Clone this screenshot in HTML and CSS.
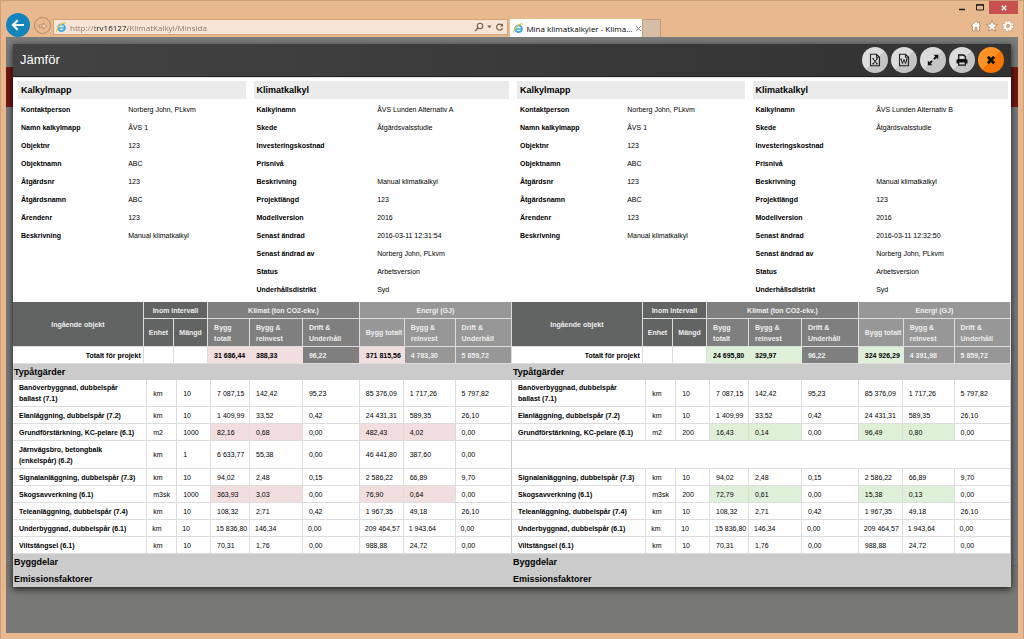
FILE: index.html
```html
<!DOCTYPE html>
<html lang="sv">
<head>
<meta charset="utf-8">
<title>Mina klimatkalkyler - Klimatkalkyl</title>
<link rel="stylesheet" href="styles.css">
</head>
<body>
<div class="browser">
  <header class="chrome">
    <div class="titlebar">
      <button class="win-btn" aria-label="Minimera"><svg width="10" height="10" viewBox="0 0 10 10"><path d="M2 6.500h6" stroke="#222" stroke-width="1.6"/></svg></button>
      <button class="win-btn" aria-label="Maximera"><svg width="10" height="10" viewBox="0 0 10 10"><path d="M1.500 2h7v5h-7z" fill="none" stroke="#222"/><path d="M1 1.800h8" stroke="#222" stroke-width="1.400"/></svg></button>
      <button class="win-btn win-close" aria-label="Stäng fönster"><svg width="8" height="8" viewBox="0 0 8 8"><path d="M1.800 1.800l4.400 4.400M6.200 1.800L1.800 6.200" stroke="#fff" stroke-width="1.300"/></svg></button>
    </div>
    <div class="toolbar">
      <button class="back" aria-label="Bakåt"><svg width="14" height="14" viewBox="0 0 14 14"><path d="M13 7H2M6.700 2.200L1.900 7l4.800 4.800" fill="none" stroke="#fff" stroke-width="2.200"/></svg></button>
      <button class="forward" aria-label="Framåt"><svg width="10" height="10" viewBox="0 0 10 10"><path d="M1 4h4V1.800L8.800 5 5 8.200V6H1z" fill="#efcfb0" stroke="#b0805a" stroke-width=".8"/></svg></button>
      <div class="address">
        <svg class="ie" width="11" height="11" viewBox="0 0 12 12"><circle cx="6" cy="6.300" r="3.700" fill="#d9f1fb" stroke="#42a9dc" stroke-width="2"/><path d="M3 6.500h6.500" stroke="#42a9dc" stroke-width="1.500"/><path d="M1 10.800C-.5 8 6-.5 10.800 1.200" fill="none" stroke="#e3c83f" stroke-width="1.300"/></svg>
        <input class="url" type="text" aria-label="Adress" value="http://trv16127/KlimatKalkyl/Minsida">
        <button class="mini" aria-label="Sök"><svg width="10" height="10" viewBox="0 0 10 10"><circle cx="6" cy="4" r="2.700" fill="none" stroke="#7b5d48" stroke-width="1.100"/><path d="M4 6L1 9" stroke="#7b5d48" stroke-width="1.300"/></svg></button>
        <button class="mini mini-narrow" aria-label="Visa adresser"><svg width="5" height="4" viewBox="0 0 5 4"><path d="M.3.500h4.400L2.500 3.200z" fill="#7b5d48"/></svg></button>
        <button class="mini" aria-label="Uppdatera"><svg width="9" height="9" viewBox="0 0 9 9"><path d="M7 2.300A3 3 0 1 0 7.500 5" fill="none" stroke="#7b5d48" stroke-width="1.200"/><path d="M8 .4v3.100H4.900z" fill="#7b5d48"/></svg></button>
      </div>
      <div class="tab">
        <svg class="ie" width="11" height="11" viewBox="0 0 12 12"><circle cx="6" cy="6.300" r="3.700" fill="#d9f1fb" stroke="#42a9dc" stroke-width="2"/><path d="M3 6.500h6.500" stroke="#42a9dc" stroke-width="1.500"/><path d="M1 10.800C-.5 8 6-.5 10.800 1.200" fill="none" stroke="#e3c83f" stroke-width="1.300"/></svg>
        <span class="tab-title">Mina klimatkalkyler - Klima...</span>
        <button class="mini mini-narrow" aria-label="Stäng flik"><svg width="7" height="7" viewBox="0 0 7 7"><path d="M1 1l5 5M6 1L1 6" stroke="#888" stroke-width="1"/></svg></button>
      </div>
      <button class="new-tab" aria-label="Ny flik"></button>
      <nav class="tools">
        <button class="mini" aria-label="Startsida"><svg width="12" height="12" viewBox="0 0 12 12"><path d="M6 1L1 6h1.500v5h2.600V7.500h1.800V11h2.600V6H11L9.500 4.400V2H8v1z" fill="#fff" stroke="#a87b58" stroke-width=".7"/></svg></button>
        <button class="mini" aria-label="Favoriter"><svg width="12" height="12" viewBox="0 0 12 12"><path d="M6 .4l1.600 3.700 4 .3-3.100 2.700 1 4L6 9l-3.500 2.100 1-4L.4 4.400l4-.3z" fill="#fff" stroke="#a87b58" stroke-width=".7"/></svg></button>
        <button class="mini" aria-label="Verktyg"><svg width="12" height="12" viewBox="0 0 12 12"><circle cx="6" cy="6" r="4.500" fill="none" stroke="#b98e6b" stroke-width="2.600" stroke-dasharray="2.200 1.330"/><circle cx="6" cy="6" r="4.400" fill="none" stroke="#fff" stroke-width="1.800" stroke-dasharray="1.900 1.556"/><circle cx="6" cy="6" r="2.900" fill="none" stroke="#fff" stroke-width="1.900"/><circle cx="6" cy="6" r="1.500" fill="#e7b98f" stroke="#b98e6b" stroke-width=".6"/></svg></button>
      </nav>
    </div>
  </header>

  <main class="viewport">
    <section class="modal" role="dialog" aria-labelledby="dialog-title">
      <header class="modal-head">
        <h1 class="modal-title" id="dialog-title">Jämför</h1>
        <div class="actions">
          <button class="round" aria-label="Exportera till Excel"><svg width="14" height="14" viewBox="0 0 14 14"><path d="M2.500 1.200h6l3 3v8.600h-9zM8.500 1.200v3h3" fill="none" stroke="#222" stroke-width="1.100"/><path d="M5 5.800l4 5M9 5.800l-4 5M4.200 5.800h2M8 5.800h1.800M4.200 10.800h2M8 10.800h1.800" stroke="#222"/></svg></button>
          <button class="round" aria-label="Exportera till Word"><svg width="14" height="14" viewBox="0 0 14 14"><path d="M2.500 1.200h6l3 3v8.600h-9zM8.500 1.200v3h3" fill="none" stroke="#222" stroke-width="1.100"/><path d="M4 6l1.400 4.500L7 6.500l1.600 4L10 6M3.500 6h1.600M8.900 6h1.600" fill="none" stroke="#222"/></svg></button>
          <button class="round" aria-label="Maximera dialog"><svg width="14" height="14" viewBox="0 0 14 14"><path d="M7.600 1.800h4.600v4.600zM1.800 7.600v4.600h4.600z" fill="#111"/><path d="M10.500 3.500L7.900 6.100M3.500 10.500l2.600-2.600" stroke="#111" stroke-width="1.900"/></svg></button>
          <button class="round" aria-label="Skriv ut"><svg width="14" height="14" viewBox="0 0 14 14"><path d="M3.700 6.500V2h5l1.600 1.600v2.900" fill="none" stroke="#111" stroke-width="1.300"/><path d="M1.500 7.500q0-1.500 1.500-1.500h8q1.500 0 1.500 1.500V10.500h-11z" fill="#111"/><path d="M3.700 8.900h6.600v3.300H3.700z" fill="#d5d5d5" stroke="#111" stroke-width="1.200"/></svg></button>
          <button class="round round-close" aria-label="Stäng"><svg width="12" height="12" viewBox="0 0 12 12"><path d="M2.800 2.800l6.400 6.400M9.200 2.800L2.800 9.200" stroke="#111" stroke-width="2.800"/></svg></button>
        </div>
      </header>

      <div class="info">
        <section class="panel">
          <h2 class="panel-title">Kalkylmapp</h2>
          <dl class="facts">
            <dt>Kontaktperson</dt><dd>Norberg John, PLkvm</dd>
            <dt>Namn kalkylmapp</dt><dd>ÅVS 1</dd>
            <dt>Objektnr</dt><dd>123</dd>
            <dt>Objektnamn</dt><dd>ABC</dd>
            <dt>Åtgärdsnr</dt><dd>123</dd>
            <dt>Åtgärdsnamn</dt><dd>ABC</dd>
            <dt>Ärendenr</dt><dd>123</dd>
            <dt>Beskrivning</dt><dd>Manual klimatkalkyl</dd>
          </dl>
        </section>
        <section class="panel">
          <h2 class="panel-title">Klimatkalkyl</h2>
          <dl class="facts">
            <dt>Kalkylnamn</dt><dd>ÅVS Lunden Alternativ A</dd>
            <dt>Skede</dt><dd>Åtgärdsvalsstudie</dd>
            <dt>Investeringskostnad</dt><dd></dd>
            <dt>Prisnivå</dt><dd></dd>
            <dt>Beskrivning</dt><dd>Manual klimatkalkyl</dd>
            <dt>Projektlängd</dt><dd>123</dd>
            <dt>Modellversion</dt><dd>2016</dd>
            <dt>Senast ändrad</dt><dd>2016-03-11 12:31:54</dd>
            <dt>Senast ändrad av</dt><dd>Norberg John, PLkvm</dd>
            <dt>Status</dt><dd>Arbetsversion</dd>
            <dt>Underhållsdistrikt</dt><dd>Syd</dd>
          </dl>
        </section>
        <section class="panel">
          <h2 class="panel-title">Kalkylmapp</h2>
          <dl class="facts">
            <dt>Kontaktperson</dt><dd>Norberg John, PLkvm</dd>
            <dt>Namn kalkylmapp</dt><dd>ÅVS 1</dd>
            <dt>Objektnr</dt><dd>123</dd>
            <dt>Objektnamn</dt><dd>ABC</dd>
            <dt>Åtgärdsnr</dt><dd>123</dd>
            <dt>Åtgärdsnamn</dt><dd>ABC</dd>
            <dt>Ärendenr</dt><dd>123</dd>
            <dt>Beskrivning</dt><dd>Manual klimatkalkyl</dd>
          </dl>
        </section>
        <section class="panel">
          <h2 class="panel-title">Klimatkalkyl</h2>
          <dl class="facts">
            <dt>Kalkylnamn</dt><dd>ÅVS Lunden Alternativ B</dd>
            <dt>Skede</dt><dd>Åtgärdsvalsstudie</dd>
            <dt>Investeringskostnad</dt><dd></dd>
            <dt>Prisnivå</dt><dd></dd>
            <dt>Beskrivning</dt><dd>Manual klimatkalkyl</dd>
            <dt>Projektlängd</dt><dd>123</dd>
            <dt>Modellversion</dt><dd>2016</dd>
            <dt>Senast ändrad</dt><dd>2016-03-11 12:32:50</dd>
            <dt>Senast ändrad av</dt><dd>Norberg John, PLkvm</dd>
            <dt>Status</dt><dd>Arbetsversion</dd>
            <dt>Underhållsdistrikt</dt><dd>Syd</dd>
          </dl>
        </section>
      </div>

      <div class="compare">
        <section class="side side-a">
          <table class="grid grid-head">
            <colgroup><col class="h-name"><col class="h-unit"><col class="h-qty"><col class="h-build"><col class="h-reinv"><col class="h-oper"><col class="h-ebuild"><col class="h-ereinv"><col></colgroup>
            <thead>
              <tr class="groups"><th rowspan="2" class="dark">Ingående objekt</th><th colspan="2" class="dark">Inom intervall</th><th colspan="3" class="mid">Klimat (ton CO2-ekv.)</th><th colspan="3" class="light">Energi (GJ)</th></tr>
              <tr class="names"><th class="dark">Enhet</th><th class="dark">Mängd</th><th class="mid start">Bygg<br>totalt</th><th class="mid start">Bygg &amp;<br>reinvest</th><th class="mid start">Drift &amp;<br>Underhåll</th><th class="light start">Bygg totalt</th><th class="light start">Bygg &amp;<br>reinvest</th><th class="light start">Drift &amp;<br>Underhåll</th></tr>
            </thead>
            <tbody>
              <tr class="total"><th class="end">Totalt för projekt</th><td></td><td></td><td class="diff">31 686,44</td><td class="diff">388,33</td><td class="mid">96,22</td><td class="diff">371 815,56</td><td class="light">4 783,30</td><td class="light">5 859,72</td></tr>
            </tbody>
          </table>
          <h2 class="group-title group-open">Typåtgärder</h2>
          <table class="grid grid-body">
            <colgroup><col class="b-name"><col class="b-unit"><col class="b-qty"><col class="b-build"><col class="b-reinv"><col class="b-oper"><col class="b-ebuild"><col class="b-ereinv"><col></colgroup>
            <tbody>
              <tr><th>Banöverbyggnad, dubbelspår<br>ballast (7.1)</th><td>km</td><td>10</td><td>7 087,15</td><td>142,42</td><td>95,23</td><td>85 376,09</td><td>1 717,26</td><td>5 797,82</td></tr>
              <tr><th>Elanläggning, dubbelspår (7.2)</th><td>km</td><td>10</td><td>1 409,99</td><td>33,52</td><td>0,42</td><td>24 431,31</td><td>589,35</td><td>26,10</td></tr>
              <tr><th>Grundförstärkning, KC-pelare (6.1)</th><td>m2</td><td>1000</td><td class="diff">82,16</td><td class="diff">0,68</td><td>0,00</td><td class="diff">482,43</td><td class="diff">4,02</td><td>0,00</td></tr>
              <tr class="tall"><th>Järnvägsbro, betongbalk<br>(enkelspår) (6.2)</th><td>km</td><td>1</td><td>6 633,77</td><td>55,38</td><td>0,00</td><td>46 441,80</td><td>387,60</td><td>0,00</td></tr>
              <tr><th>Signalanläggning, dubbelspår (7.3)</th><td>km</td><td>10</td><td>94,02</td><td>2,48</td><td>0,15</td><td>2 586,22</td><td>66,89</td><td>9,70</td></tr>
              <tr><th>Skogsavverkning (6.1)</th><td>m3sk</td><td>1000</td><td class="diff">363,93</td><td class="diff">3,03</td><td>0,00</td><td class="diff">76,90</td><td class="diff">0,64</td><td>0,00</td></tr>
              <tr><th>Teleanläggning, dubbelspår (7.4)</th><td>km</td><td>10</td><td>108,32</td><td>2,71</td><td>0,42</td><td>1 967,35</td><td>49,18</td><td>26,10</td></tr>
              <tr class="wide"><th>Underbyggnad, dubbelspår (6.1)</th><td>km</td><td>10</td><td>15 836,80</td><td>146,34</td><td>0,00</td><td>209 464,57</td><td>1 943,64</td><td>0,00</td></tr>
              <tr><th>Viltstängsel (6.1)</th><td>km</td><td>10</td><td>70,31</td><td>1,76</td><td>0,00</td><td>988,88</td><td>24,72</td><td>0,00</td></tr>
            </tbody>
          </table>
          <h2 class="group-title">Byggdelar</h2>
          <h2 class="group-title group-last">Emissionsfaktorer</h2>
        </section>

        <section class="side side-b">
          <table class="grid grid-head">
            <colgroup><col class="h-name"><col class="h-unit"><col class="h-qty"><col class="h-build"><col class="h-reinv"><col class="h-oper"><col class="h-ebuild"><col class="h-ereinv"><col></colgroup>
            <thead>
              <tr class="groups"><th rowspan="2" class="dark">Ingående objekt</th><th colspan="2" class="dark">Inom intervall</th><th colspan="3" class="mid">Klimat (ton CO2-ekv.)</th><th colspan="3" class="light">Energi (GJ)</th></tr>
              <tr class="names"><th class="dark">Enhet</th><th class="dark">Mängd</th><th class="mid start">Bygg<br>totalt</th><th class="mid start">Bygg &amp;<br>reinvest</th><th class="mid start">Drift &amp;<br>Underhåll</th><th class="light start">Bygg totalt</th><th class="light start">Bygg &amp;<br>reinvest</th><th class="light start">Drift &amp;<br>Underhåll</th></tr>
            </thead>
            <tbody>
              <tr class="total"><th class="end">Totalt för projekt</th><td></td><td></td><td class="diff">24 695,80</td><td class="diff">329,97</td><td class="mid">96,22</td><td class="diff">324 926,29</td><td class="light">4 391,98</td><td class="light">5 859,72</td></tr>
            </tbody>
          </table>
          <h2 class="group-title group-open">Typåtgärder</h2>
          <table class="grid grid-body">
            <colgroup><col class="b-name"><col class="b-unit"><col class="b-qty"><col class="b-build"><col class="b-reinv"><col class="b-oper"><col class="b-ebuild"><col class="b-ereinv"><col></colgroup>
            <tbody>
              <tr><th>Banöverbyggnad, dubbelspår<br>ballast (7.1)</th><td>km</td><td>10</td><td>7 087,15</td><td>142,42</td><td>95,23</td><td>85 376,09</td><td>1 717,26</td><td>5 797,82</td></tr>
              <tr><th>Elanläggning, dubbelspår (7.2)</th><td>km</td><td>10</td><td>1 409,99</td><td>33,52</td><td>0,42</td><td>24 431,31</td><td>589,35</td><td>26,10</td></tr>
              <tr><th>Grundförstärkning, KC-pelare (6.1)</th><td>m2</td><td>200</td><td class="diff">16,43</td><td class="diff">0,14</td><td>0,00</td><td class="diff">96,49</td><td class="diff">0,80</td><td>0,00</td></tr>
              <tr class="tall"><td colspan="9"></td></tr>
              <tr><th>Signalanläggning, dubbelspår (7.3)</th><td>km</td><td>10</td><td>94,02</td><td>2,48</td><td>0,15</td><td>2 586,22</td><td>66,89</td><td>9,70</td></tr>
              <tr><th>Skogsavverkning (6.1)</th><td>m3sk</td><td>200</td><td class="diff">72,79</td><td class="diff">0,61</td><td>0,00</td><td class="diff">15,38</td><td class="diff">0,13</td><td>0,00</td></tr>
              <tr><th>Teleanläggning, dubbelspår (7.4)</th><td>km</td><td>10</td><td>108,32</td><td>2,71</td><td>0,42</td><td>1 967,35</td><td>49,18</td><td>26,10</td></tr>
              <tr class="wide"><th>Underbyggnad, dubbelspår (6.1)</th><td>km</td><td>10</td><td>15 836,80</td><td>146,34</td><td>0,00</td><td>209 464,57</td><td>1 943,64</td><td>0,00</td></tr>
              <tr><th>Viltstängsel (6.1)</th><td>km</td><td>10</td><td>70,31</td><td>1,76</td><td>0,00</td><td>988,88</td><td>24,72</td><td>0,00</td></tr>
            </tbody>
          </table>
          <h2 class="group-title">Byggdelar</h2>
          <h2 class="group-title group-last">Emissionsfaktorer</h2>
        </section>
      </div>
    </section>
  </main>
</div>
</body>
</html>
```
FILE: styles.css
```css
* { box-sizing: border-box; }

body {
  margin: 0;
  font-family: "Liberation Sans", Arial, sans-serif;
  font-size: 7px;
  line-height: 11px;
  color: #000;
}

button {
  display: flex;
  align-items: center;
  justify-content: center;
  padding: 0;
  border: 0;
  background: none;
  font: inherit;
}

h1, h2, dl, dd { margin: 0; }

/* Browser window */
.browser {
  display: flex;
  flex-direction: column;
  min-height: 100vh;
  padding: 0 5px 6px 5px;
  background: #e8b98e;
  border: solid #c99e79;
  border-width: 1px 1px 0 1px;
}

.titlebar {
  display: flex;
  justify-content: flex-end;
  height: 13px;
}

.win-btn { width: 18px; height: 13px; }
.win-close { width: 29px; background: #c75050; }

.toolbar {
  display: flex;
  align-items: flex-end;
  height: 23px;
}

.back {
  flex: none;
  width: 24px;
  height: 24px;
  border-radius: 50%;
  background: #1484bd;
}

.forward {
  flex: none;
  width: 17px;
  height: 17px;
  margin: 0 2px 3px 4px;
  border: 1px solid #b98a63;
  border-radius: 50%;
}

.address {
  display: flex;
  align-items: center;
  width: 45%;
  height: 16px;
  margin: 0 2px 2px 0;
  padding: 0 2px;
  background: #f7e6d7;
  border: 1px solid #d5a379;
}

.ie { flex: none; }

.url {
  flex: 1;
  min-width: 0;
  height: 14px;
  margin-left: 3px;
  padding: 0;
  border: 0;
  outline: 0;
  font-family: "Open Sans", "Noto Sans", sans-serif;
  font-size: 8px;
  background: linear-gradient(90deg, #857363 0 25px, #111 25px 58px, #857363 58px);
  background-clip: text;
  -webkit-text-fill-color: transparent;
}

.mini { flex: none; min-width: 12px; height: 12px; }
.mini-narrow { min-width: 8px; }

.tab {
  display: flex;
  align-items: center;
  gap: 2px;
  width: 132px;
  height: 18px;
  padding: 0 2px 0 3px;
  background: #fff;
}

.tab-title {
  flex: 1;
  white-space: nowrap;
  font-family: "Open Sans", "Noto Sans", sans-serif;
  font-size: 8px;
}

.new-tab {
  width: 19px;
  height: 18px;
  background: #d5bda6;
  border: solid #c29c7b;
  border-width: 1px 1px 0 1px;
}

.tools {
  display: flex;
  gap: 4px;
  margin: 0 4px 5px auto;
}

/* Dimmed page behind the dialog */
.viewport {
  flex: 1;
  padding: 7px 7px 40px 7px;
  background: linear-gradient(#7b7c7c 0 30px, #701813 30px 70px, #787a7b 70px 528px, #6d6d6d 528px 529px, #787876 529px);
}

.modal {
  background: #fff;
  box-shadow: 0 2px 7px rgba(0, 0, 0, .8);
}

.modal-head {
  display: flex;
  align-items: center;
  justify-content: space-between;
  height: 33px;
  padding: 0 7px;
  background: linear-gradient(90deg, #434343, #323232);
  border-bottom: 1px solid #222;
}

.modal-title {
  font-size: 13px;
  line-height: 16px;
  font-weight: 400;
  color: #fff;
}

.actions { display: flex; gap: 3px; }

.round {
  width: 26px;
  height: 26px;
  border-radius: 50%;
  background: linear-gradient(135deg, #dcdcdc 50%, #c4c4c4 50%);
}

.round-close { background: linear-gradient(135deg, #ff9226 50%, #f57600 50%); }

/* Calculation facts */
.info {
  display: grid;
  grid-template-columns: 228fr 256fr 228fr 256fr;
  gap: 8px;
  padding: 3px 3px 3px 5px;
  border-top: 1px solid #ddd;
}

.panel-title {
  padding: 0 3px;
  background: #ebebeb;
  font-size: 9px;
  line-height: 18px;
}

.facts {
  display: grid;
  grid-template-columns: 48% 1fr;
  grid-auto-rows: 18px;
  padding-top: 2px;
  line-height: 18px;
}

.facts dt { padding-left: 3px; font-weight: 700; }
.facts dd { padding-left: 1px; }

/* Comparison tables */
.compare {
  display: grid;
  grid-template-columns: 1fr 1fr;
}

.grid {
  width: 100%;
  table-layout: fixed;
  border-collapse: separate;
  border-spacing: 0;
}

.grid th,
.grid td {
  height: 17px;
  padding: 2px 0 2px 6px;
  border: solid #ddd;
  border-width: 0 1px 1px 0;
  text-align: left;
  white-space: nowrap;
}

.h-name { width: 26.2%; }
.h-unit { width: 6.1%; }
.h-qty { width: 6.8%; }
.h-build { width: 8.4%; }
.h-reinv { width: 10.6%; }
.h-oper { width: 11.4%; }
.h-ebuild { width: 9%; }
.h-ereinv { width: 10.2%; }

.b-name { width: 26.9%; }
.b-unit { width: 6%; }
.b-qty { width: 6.8%; }
.b-build { width: 7.8%; }
.b-reinv { width: 10.6%; }
.b-oper { width: 11.4%; }
.b-ebuild { width: 8.8%; }
.b-ereinv { width: 10.4%; }

.grid-head thead th { padding: 0; color: #eee; text-align: center; }
.grid-head thead .start { padding-left: 6px; text-align: left; }
.grid-head .names th { height: 28px; }
.grid-head .total > * { padding-left: 6px; font-weight: 700; }
.grid-head .total .end { padding-right: 2px; text-align: right; }
.grid-head .total .diff { border-right-color: transparent; }

.grid .dark { background: #616463; }
.grid .mid { background: #7f7f7f; color: #eee; }
.grid .light { background: #979797; color: #eee; }

.side-a .diff { background: #f2dede; }
.side-b .diff { background: #dff0d8; }

.grid .tall > * { height: 28px; }
.grid .wide > td { padding-left: 5px; }
.grid-body tr > :last-child { border-right-color: #ccc; }

.group-title {
  height: 17px;
  padding: 0 1px;
  background: #cbcbcb;
  font-size: 9px;
  line-height: 17px;
}

.group-open,
.group-last { height: 16px; line-height: 16px; }
```
